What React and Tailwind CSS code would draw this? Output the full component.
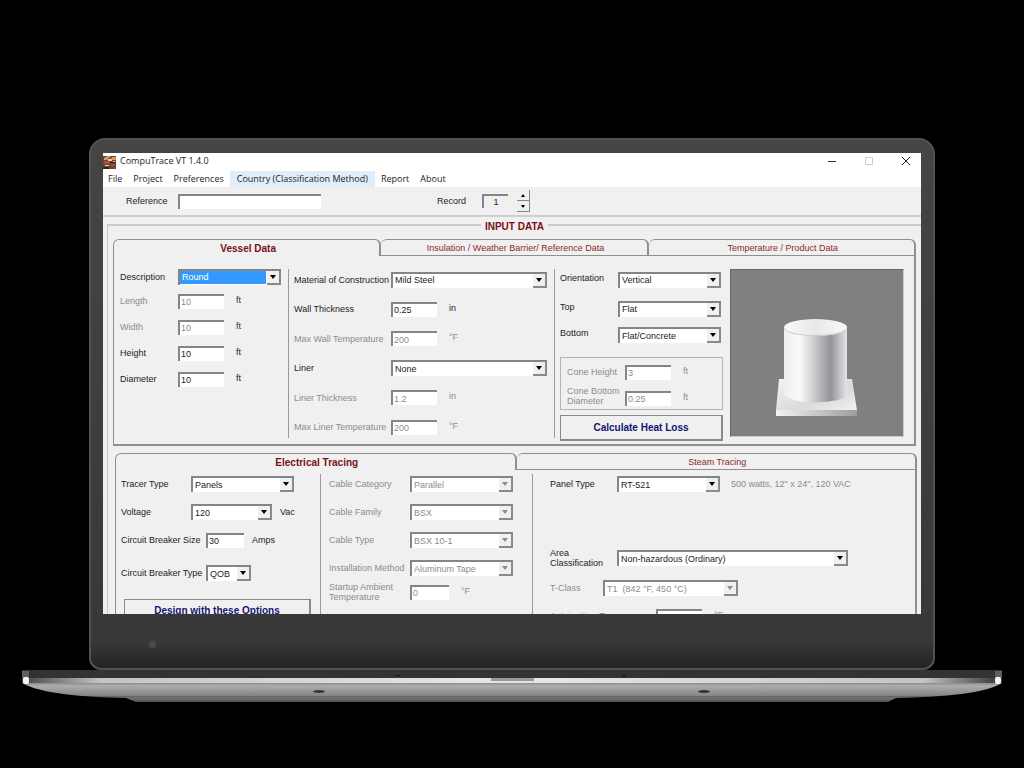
import React from 'react'
import clsx from 'clsx'

const menus = ['File', 'Project', 'Preferences', 'Country (Classification Method)', 'Report', 'About']

function Select({ id, value, width, disabled, focused }) {
  return (
    <div className={clsx('flex h-4 border-t-2 border-l-2 border-[#858585] bg-white', width)}>
      <select
        id={id}
        disabled={disabled}
        className={clsx(
          'min-w-0 flex-1 appearance-none pl-[2px] leading-[13px] outline-none',
          focused ? 'mr-px mb-px bg-[#3399ff] text-white' : disabled ? 'text-[#8c8c8c]' : 'text-[#1c1c1c]'
        )}
      >
        <option>{value}</option>
      </select>
      <span className="flex w-[14px] items-center justify-center border-r-2 border-b-2 border-[#8a8a8a] bg-[#f0f0f0]">
        <svg viewBox="0 0 6 4" className={clsx('h-[4px] w-[6px]', disabled ? 'fill-[#8c8c8c]' : 'fill-black')}>
          <path d="M0 0h6L3 4z" />
        </svg>
      </span>
    </div>
  )
}

function Input({ id, value, width = 'w-[46px]', disabled }) {
  return (
    <input
      id={id}
      defaultValue={value}
      disabled={disabled}
      className={clsx(
        'h-[15px] border-t-2 border-l-2 border-[#858585] bg-white pl-px leading-[13px] outline-none',
        disabled ? 'text-[#8c8c8c]' : 'text-[#1c1c1c]',
        width
      )}
    />
  )
}

function Row({ id, label, labelWidth, height, unit, disabled, raised, children }) {
  return (
    <div className={clsx('flex items-center', height, disabled && 'text-[#8c8c8c]')}>
      <label htmlFor={id} className={clsx('shrink-0 whitespace-pre-line', labelWidth, raised && 'pb-1')}>{label}</label>
      {children}
      {unit && <span className="ml-3 pb-[3px]">{unit}</span>}
    </div>
  )
}

function Divider() {
  return <div className="my-1 w-px shrink-0 bg-[#9a9a9a]" />
}

function Tabs({ items }) {
  return (
    <div role="tablist" className="flex">
      {items.map((t, i) => (
        <button
          key={t}
          role="tab"
          aria-selected={i === 0}
          className={clsx(
            'h-[17px] flex-1 rounded-t-md border-t border-r-2 border-[#8f8f8f] pl-[3px]',
            i === 0 ? 'border-l pt-[2px] text-[10px] font-bold text-[#7a0f14]' : 'border-b text-[#8b2a2e]'
          )}
        >
          {t}
        </button>
      ))}
    </div>
  )
}

function Vessel() {
  return (
    <svg viewBox="0 0 82 100" className="mt-[48px] mr-[2px] h-[100px] w-[82px]">
      <defs>
        <linearGradient id="side">
          <stop offset="0" stopColor="#eceeef" />
          <stop offset="0.25" stopColor="#fbfbfc" />
          <stop offset="0.74" stopColor="#929497" />
          <stop offset="1" stopColor="#e4e5e7" />
        </linearGradient>
        <linearGradient id="lid">
          <stop offset="0" stopColor="#fafafa" />
          <stop offset="0.5" stopColor="#e6e8e9" />
          <stop offset="1" stopColor="#fafafa" />
        </linearGradient>
        <linearGradient id="slab" x2="1" y2="1">
          <stop offset="0" stopColor="#f3f4f5" />
          <stop offset="0.6" stopColor="#d8dadc" />
          <stop offset="1" stopColor="#f0f1f2" />
        </linearGradient>
        <linearGradient id="edge">
          <stop offset="0" stopColor="#f2f3f4" />
          <stop offset="1" stopColor="#9b9d9f" />
        </linearGradient>
      </defs>
      <path d="M4 61h73l5 31H1z" fill="url(#slab)" />
      <path d="M1 92h81v6H1z" fill="url(#edge)" />
      <path d="M9 10v66c3 11 60 11 63 0V10z" fill="url(#side)" />
      <ellipse cx="40.5" cy="9.5" rx="31.5" ry="8.5" fill="url(#lid)" />
      <path d="M9 10c3 10 60 10 63 0" fill="none" stroke="#c9cbcd" />
    </svg>
  )
}

function VesselPanel() {
  return (
    <section>
      <Tabs items={['Vessel Data', 'Insulation / Weather Barrier/ Reference Data', 'Temperature / Product Data']} />
      <div className="flex border-r-2 border-b-2 border-l border-[#8f8f8f] pt-[9px] pb-[2px]">
        <div className="w-[174px] shrink-0 pt-px pl-[6px]">
          <Row id="description" label="Description" labelWidth="w-[58px]" height="h-[22px]">
            <Select id="description" value="Round" width="w-[103px]" focused />
          </Row>
          <Row id="length" label="Length" labelWidth="w-[58px]" height="h-[26px]" disabled unit={<span className="text-[#333]">ft</span>}>
            <Input id="length" value="10" disabled />
          </Row>
          <Row id="width" label="Width" labelWidth="w-[58px]" height="h-[26px]" disabled unit={<span className="text-[#333]">ft</span>}>
            <Input id="width" value="10" disabled />
          </Row>
          <Row id="height" label="Height" labelWidth="w-[58px]" height="h-[26px]" unit="ft">
            <Input id="height" value="10" />
          </Row>
          <Row id="diameter" label="Diameter" labelWidth="w-[58px]" height="h-[26px]" unit="ft">
            <Input id="diameter" value="10" />
          </Row>
        </div>
        <Divider />
        <div className="grid h-[177px] w-[265px] shrink-0 grid-rows-6 pl-[5px]">
          <Row id="material" label="Material of Construction" labelWidth="w-[97px]">
            <Select id="material" value="Mild Steel" width="w-[156px]" />
          </Row>
          <Row id="wall" label="Wall Thickness" labelWidth="w-[97px]" unit="in">
            <Input id="wall" value="0.25" />
          </Row>
          <Row id="maxwall" label="Max Wall Temperature" labelWidth="w-[97px]" unit="°F" disabled>
            <Input id="maxwall" value="200" disabled />
          </Row>
          <Row id="liner" label="Liner" labelWidth="w-[97px]">
            <Select id="liner" value="None" width="w-[156px]" />
          </Row>
          <Row id="linerthick" label="Liner Thickness" labelWidth="w-[97px]" unit="in" disabled>
            <Input id="linerthick" value="1.2" disabled />
          </Row>
          <Row id="maxliner" label="Max Liner Temperature" labelWidth="w-[97px]" unit="°F" disabled>
            <Input id="maxliner" value="200" disabled />
          </Row>
        </div>
        <Divider />
        <div className="w-[168px] shrink-0 pl-[5px]">
          <Row id="orientation" label="Orientation" labelWidth="w-[58px]" height="h-[29px]" raised>
            <Select id="orientation" value="Vertical" width="w-[103px]" />
          </Row>
          <Row id="top" label="Top" labelWidth="w-[58px]" height="h-[29px]" raised>
            <Select id="top" value="Flat" width="w-[103px]" />
          </Row>
          <Row id="bottom" label="Bottom" labelWidth="w-[58px]" height="h-[24px]" raised>
            <Select id="bottom" value="Flat/Concrete" width="w-[103px]" />
          </Row>
          <div className="mt-[10px] h-[53px] border border-[#b4b4b4] pt-px pl-[6px]">
            <Row id="coneheight" label="Cone Height" labelWidth="w-[58px]" height="h-[26px]" unit="ft" disabled>
              <Input id="coneheight" value="3" disabled />
            </Row>
            <Row id="conebottom" label={'Cone Bottom\nDiameter'} labelWidth="w-[58px]" height="h-[26px]" unit="ft" disabled raised>
              <Input id="conebottom" value="0.25" disabled />
            </Row>
          </div>
          <button className="mt-[5px] h-[26px] w-full border border-r-2 border-b-2 border-[#8a8a8a] text-[10px] font-bold text-[#14146e]">
            Calculate Heat Loss
          </button>
        </div>
        <div className="mt-1 mr-[10px] ml-[7px] flex h-[168px] flex-1 justify-center border-t border-r border-b border-l border-t-[#666] border-r-[#ccc] border-b-[#ccc] border-l-[#666] bg-[#808080]">
          <Vessel />
        </div>
      </div>
    </section>
  )
}

function TracingPanel() {
  return (
    <section className="mt-[7px] -mr-px ml-[2px]">
      <Tabs items={['Electrical Tracing', 'Steam Tracing']} />
      <div className="flex border-r-2 border-l border-[#8f8f8f] pb-4">
        <div className="w-[204px] shrink-0 pl-[5px]">
          <Row id="tracer" label="Tracer Type" labelWidth="w-[70px]" height="h-[28px]">
            <Select id="tracer" value="Panels" width="w-[103px]" />
          </Row>
          <Row id="voltage" label="Voltage" labelWidth="w-[70px]" height="h-[28px]">
            <Select id="voltage" value="120" width="w-[81px]" />
            <span className="ml-2">Vac</span>
          </Row>
          <Row id="breakersize" label="Circuit Breaker Size" labelWidth="w-[85px]" height="h-[28px]">
            <Input id="breakersize" value="30" width="w-[38px]" />
            <span className="ml-2">Amps</span>
          </Row>
          <Row id="breakertype" label="Circuit Breaker Type" labelWidth="w-[85px]" height="h-[38px]">
            <Select id="breakertype" value="QOB" width="w-[45px]" />
          </Row>
          <button className="mt-[7px] ml-[3px] h-[25px] w-[187px] border border-r-2 border-b-2 border-[#8a8a8a] text-[10px] font-bold text-[#14146e]">
            Design with these Options
          </button>
        </div>
        <Divider />
        <div className="w-[211px] shrink-0 pl-2">
          <Row id="category" label="Cable Category" labelWidth="w-[81px]" height="h-[28px]" disabled>
            <Select id="category" value="Parallel" width="w-[103px]" disabled />
          </Row>
          <Row id="family" label="Cable Family" labelWidth="w-[81px]" height="h-[28px]" disabled>
            <Select id="family" value="BSX" width="w-[103px]" disabled />
          </Row>
          <Row id="cabletype" label="Cable Type" labelWidth="w-[81px]" height="h-[28px]" disabled>
            <Select id="cabletype" value="BSX 10-1" width="w-[103px]" disabled />
          </Row>
          <Row id="install" label="Installation Method" labelWidth="w-[81px]" height="h-[28px]" disabled>
            <Select id="install" value="Aluminum Tape" width="w-[103px]" disabled />
          </Row>
          <Row id="startup" label={'Startup Ambient\nTemperature'} labelWidth="w-[81px]" height="h-[20px]" unit="°F" disabled>
            <Input id="startup" value="0" width="w-[39px]" disabled />
          </Row>
        </div>
        <Divider />
        <div className="min-w-0 flex-1 pl-[17px]">
          <Row id="panel" label="Panel Type" labelWidth="w-[67px]" height="h-[28px]">
            <Select id="panel" value="RT-521" width="w-[103px]" />
            <span className="ml-[11px] text-[#8c8c8c]">500 watts, 12" x 24", 120 VAC</span>
          </Row>
          <div className="pt-[45px]">
            <Row id="area" label={'Area\nClassification'} labelWidth="w-[67px]" height="h-[30px]">
              <Select id="area" value="Non-hazardous (Ordinary)" width="w-[231px]" />
            </Row>
          </div>
          <Row id="tclass" label="T-Class" labelWidth="w-[53px]" height="h-[30px]" disabled>
            <Select id="tclass" value={'T1\u00A0 (842 °F, 450 °C)'} width="w-[135px]" disabled />
          </Row>
          <Row id="ignition" label="Autoignition Temp" labelWidth="w-[106px]" height="h-[26px]" unit="°F" disabled>
            <Input id="ignition" value="1000" disabled />
          </Row>
        </div>
      </div>
    </section>
  )
}

function AppIcon() {
  return (
    <svg viewBox="0 0 13 13" className="mt-[2px] h-[13px] w-[13px]">
      <path fill="#6b4634" d="M0 0h13v13H0z" />
      <path fill="#d39a68" d="M1 2l4-2h3L4 4H1zM9 1h4v3H8z" />
      <path fill="#b04a2c" d="M1 5h6v3H1zM8 8h4v2H8z" />
      <path fill="#e8cfa8" d="M5 3h4v2H5zM2 9h4v1H2zM10 5h2v1h-2z" />
      <path fill="#2b2320" d="M0 11h6v2H0zM7 6h5v1H7z" />
    </svg>
  )
}

function AppWindow() {
  return (
    <div className="aspect-[818/461] overflow-hidden bg-[#f0f0f0] font-['Liberation_Sans',Arial,sans-serif] text-[9px] leading-[10px] text-[#1c1c1c]">
      <header className="bg-white font-['Open_Sans','Noto_Sans',sans-serif]">
        <div className="flex h-4 items-center">
          <AppIcon />
          <h1 className="ml-1">CompuTrace VT 1.4.0</h1>
          <div className="mr-[10px] ml-auto flex items-center gap-[27px]">
            <button aria-label="Minimize">
              <svg viewBox="0 0 10 10" className="size-[10px] fill-none stroke-[#333]"><path d="M1 5.5h8" /></svg>
            </button>
            <button aria-label="Maximize" disabled>
              <svg viewBox="0 0 10 10" className="size-[10px] fill-none stroke-[#ccc]"><path d="M1.5 1.5h7v7h-7z" /></svg>
            </button>
            <button aria-label="Close">
              <svg viewBox="0 0 10 10" className="size-[10px] fill-none stroke-[#222]"><path d="M1 1l8 8M9 1l-8 8" /></svg>
            </button>
          </div>
        </div>
        <nav className="flex h-[18px] items-center gap-px pt-px">
          {menus.map((m, i) => (
            <button key={m} className={clsx('h-4', i === 3 ? 'bg-[#dfeefa] px-[7px]' : 'px-[5px]')}>{m}</button>
          ))}
        </nav>
      </header>
      <div className="flex h-[30px] items-center border-b-2 border-[#cfcfcf] pl-[23px]">
        <label htmlFor="reference" className="w-[52px]">Reference</label>
        <Input id="reference" width="w-[143px]" />
        <label htmlFor="record" className="ml-[116px] w-[45px]">Record</label>
        <input id="record" defaultValue="1" className="h-[14px] w-[26px] border-t-2 border-l-2 border-[#858585] text-center" />
        <div className="ml-[9px] flex h-[22px] w-[13px] flex-col">
          <button aria-label="Next record" className="flex flex-1 items-center justify-center border-r border-b border-[#858585]">
            <svg viewBox="0 0 4 3" className="h-[3px] w-[4px]"><path d="M0 3h4L2 0z" /></svg>
          </button>
          <button aria-label="Previous record" className="flex flex-1 items-center justify-center border-r border-b border-[#858585]">
            <svg viewBox="0 0 4 3" className="h-[3px] w-[4px]"><path d="M0 0h4L2 3z" /></svg>
          </button>
        </div>
      </div>
      <fieldset className="ml-1 border-t-2 border-l border-[#cacaca] pr-[5px] pb-4 pl-[5px]">
        <legend className="mx-auto h-[15px] px-1 pt-1 text-[10px] leading-[12px] font-bold text-[#7a0f14]">INPUT DATA</legend>
        <div className="pt-[7px]">
          <VesselPanel />
          <TracingPanel />
        </div>
      </fieldset>
    </div>
  )
}

function LaptopBase() {
  return (
    <svg viewBox="0 0 980 34" preserveAspectRatio="none" className="block h-[34px] w-full">
      <defs>
        <linearGradient id="deck">
          <stop offset="0" stopColor="#444" />
          <stop offset="0.08" stopColor="#c4c4c4" />
          <stop offset="0.45" stopColor="#e4e4e4" />
          <stop offset="0.55" stopColor="#e4e4e4" />
          <stop offset="0.92" stopColor="#c4c4c4" />
          <stop offset="1" stopColor="#333" />
        </linearGradient>
        <linearGradient id="body" x2="0" y2="1">
          <stop offset="0" stopColor="#8c8c8c" />
          <stop offset="0.15" stopColor="#adadad" />
          <stop offset="0.68" stopColor="#848484" />
          <stop offset="0.72" stopColor="#5c5c5c" />
          <stop offset="0.78" stopColor="#757575" />
          <stop offset="1" stopColor="#505050" />
        </linearGradient>
      </defs>
      <path d="M0 0h980v9H0z" fill="#333" />
      <path d="M0 13C20 24 60 27 104 28l10 4h752l8-4c50-1 90-5 106-15z" fill="url(#body)" />
      <path d="M0 8h980v5H0z" fill="url(#deck)" />
      <path d="M469 8h43v3h-43z" fill="#999" />
      <path d="M0 1h7v7H0zM973 1h7v7h-7z" fill="#606060" />
      <rect x="1" y="7" width="6" height="7" rx="2" fill="#f4f4f4" />
      <rect x="973" y="7" width="6" height="7" rx="2" fill="#f4f4f4" />
      <ellipse cx="297" cy="21.5" rx="6" ry="1.5" fill="#333" />
      <ellipse cx="682" cy="21.5" rx="6" ry="1.5" fill="#333" />
      <path d="M374 5h4v1h-4zM600 5h4v1h-4z" fill="#111" />
    </svg>
  )
}

export default function App() {
  return (
    <main className="min-h-screen bg-black px-[22px] pt-[138px] pb-8">
      <div className="mx-[67px] rounded-t-2xl rounded-b-xl border-2 border-[#525252] bg-linear-to-b from-[#454545] via-[#383838] via-95% to-[#242424] px-3 pt-[13px]">
        <AppWindow />
        <div className="flex h-[54px] items-center pt-[6px] pl-[46px]">
          <span className="size-[7px] rounded-full bg-[#4a4a4a]" />
        </div>
      </div>
      <LaptopBase />
    </main>
  )
}
